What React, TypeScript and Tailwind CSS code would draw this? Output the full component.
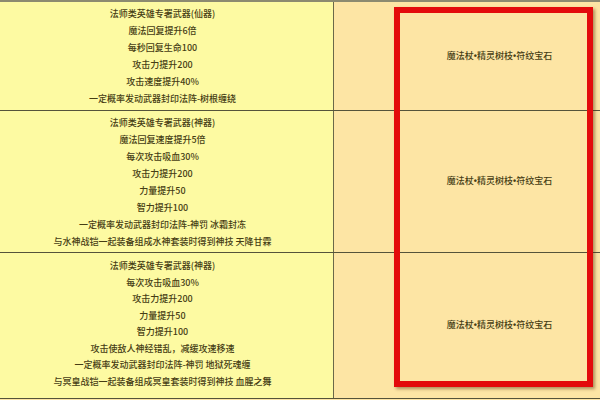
import React from 'react';

const rows: { lines: string[]; height: string; leading: string }[] = [
  {
    height: 'h-[109px]',
    leading: 'leading-[17px]',
    lines: [
      '法师类英雄专署武器(仙器)',
      '魔法回复提升6倍',
      '每秒回复生命100',
      '攻击力提升200',
      '攻击速度提升40%',
      '一定概率发动武器封印法阵-树根缠绕',
    ],
  },
  {
    height: 'h-[142px]',
    leading: 'leading-[17px]',
    lines: [
      '法师类英雄专署武器(神器)',
      '魔法回复速度提升5倍',
      '每次攻击吸血30%',
      '攻击力提升200',
      '力量提升50',
      '智力提升100',
      '一定概率发动武器封印法阵-神罚 冰霜封冻',
      '与水神战铠一起装备组成水神套装时得到神技 天降甘霖',
    ],
  },
  {
    height: 'h-[146px]',
    leading: 'leading-[16.5px]',
    lines: [
      '法师类英雄专署武器(神器)',
      '每次攻击吸血30%',
      '攻击力提升200',
      '力量提升50',
      '智力提升100',
      '攻击使敌人神经错乱，减缓攻速移速',
      '一定概率发动武器封印法阵-神罚 地狱死魂缠',
      '与冥皇战铠一起装备组成冥皇套装时得到神技 血腥之舞',
    ],
  },
];

const Dot = () => (
  <span style={{ fontFamily: '"Liberation Sans", sans-serif' }} className="font-bold">
    •
  </span>
);

export default function App() {
  return (
    <div
      className="relative w-[600px] h-[400px] overflow-hidden bg-[#fde5a4] text-[9px] font-medium text-[#463d14]"
      style={{ fontFamily: '"Noto Sans CJK SC", "Liberation Sans", sans-serif' }}
    >
      <div className="flex flex-col w-[665px] border-t-2 border-[#8c8a70]">
        {rows.map((row, i) => (
          <div key={i} className={`flex ${row.height} border-b border-[#55533a]`}>
            <div
              className={`w-[334px] shrink-0 bg-[#fdfaa2] border-r border-[#6b6848] pr-[8px] flex flex-col items-center ${
                i === 2 ? 'pt-[5px]' : 'justify-center'
              } ${row.leading}`}
            >
              {row.lines.map((l, j) => (
                <div key={j} className="whitespace-nowrap">
                  {l}
                </div>
              ))}
            </div>
            <div className="flex-1 bg-[#fde5a4] flex items-center justify-center">
              <span className="whitespace-nowrap">
                魔法杖<Dot />精灵树枝<Dot />符纹宝石
              </span>
            </div>
          </div>
        ))}
      </div>

      {/* red highlight box */}
      <div className="absolute left-[394px] top-[7px] w-[199px] h-[380px] border-[6px] border-[#e30b0b] shadow-[2px_2px_3px_rgba(80,40,0,0.45)] pointer-events-none" />
    </div>
  );
}
